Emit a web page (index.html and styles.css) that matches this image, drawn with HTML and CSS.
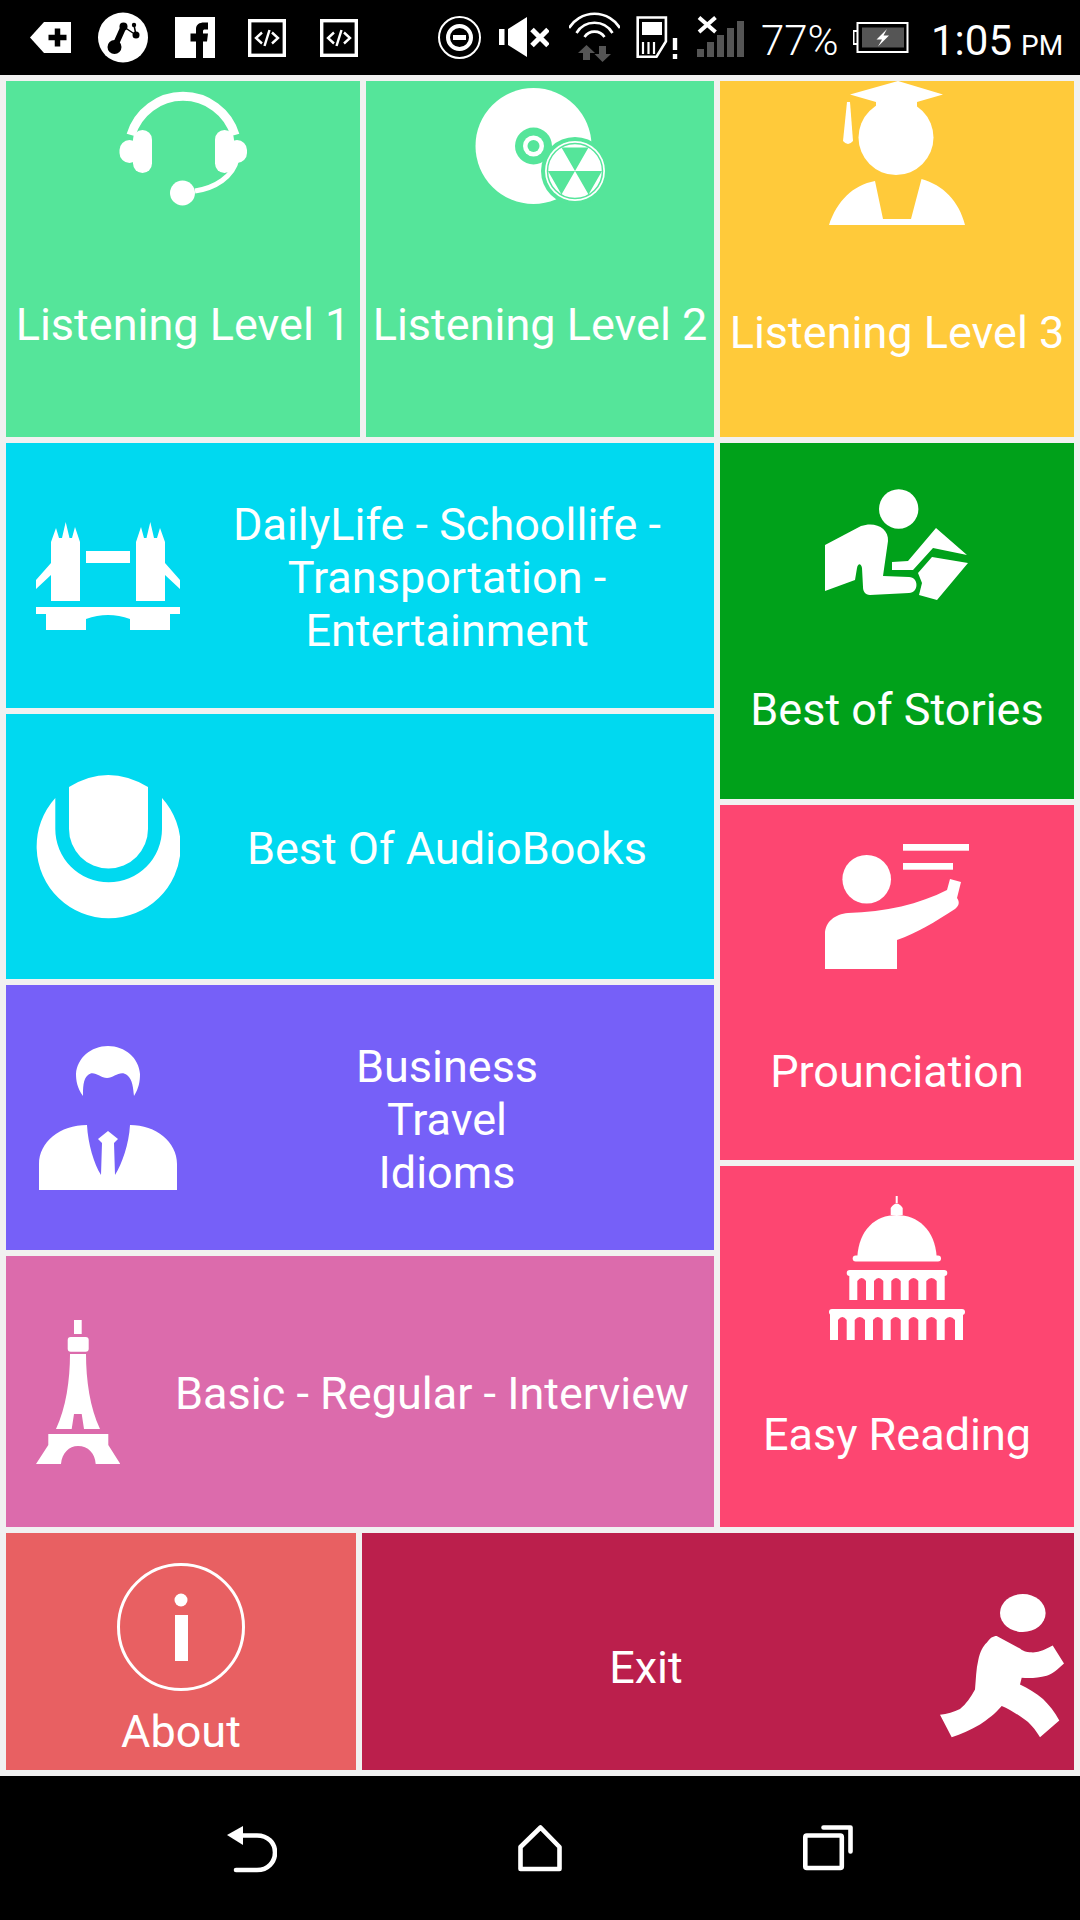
FILE: index.html
```html
<!DOCTYPE html>
<html lang="en">
<head>
    <meta charset="UTF-8">
    <meta name="viewport" content="width=device-width, initial-scale=1.0">
    <title>Listening Menu</title>
    <link rel="stylesheet" href="styles.css">
</head>
<body>
    <!-- Status bar -->
    <div class="status-bar">
        <svg class="st-tag" viewBox="30 0 42 75"><path d="M30 37.5 44 22H71V53H44Z" fill="#fff"/><path d="M57.5 28.5V46.5M48.5 37.5H66.5" stroke="#000" stroke-width="5.5"/></svg>
        <svg class="st-blob" viewBox="98 0 50 75"><circle cx="123" cy="37.5" r="25" fill="#fff"/><path d="M114.5 47 123.5 27" stroke="#000" stroke-width="6" stroke-linecap="round"/><circle cx="114.5" cy="47" r="7"/><circle cx="123.5" cy="26.5" r="4"/><circle cx="134" cy="25" r="2.2"/><circle cx="136" cy="35" r="3.5"/><path d="M124 27 136 35M134 25 136 35" stroke="#000" stroke-width="1.5"/></svg>
        <svg class="st-fb" viewBox="175 0 40 75"><rect x="175" y="17" width="40" height="41" fill="#fff"/><path d="M196 58V41.5H190.5V33.5H196V29C196 24.5 199.5 22.5 204 22.5H208V29.5H205C203.5 29.5 203 30 203 31.5V33.5H208L207 41.5H203V58Z"/></svg>
        <svg class="st-code" viewBox="248 0 38 75"><rect x="249.7" y="20.7" width="34.6" height="34.6" fill="none" stroke="#fff" stroke-width="3.4"/><path d="M262 32.5 256 38 262 43.5M272 32.5 278 38 272 43.5" fill="none" stroke="#fff" stroke-width="2.4"/><path d="M269.5 30 264.5 46" stroke="#fff" stroke-width="2.4"/></svg>
        <svg class="st-code st-code-2" viewBox="248 0 38 75"><rect x="249.7" y="20.7" width="34.6" height="34.6" fill="none" stroke="#fff" stroke-width="3.4"/><path d="M262 32.5 256 38 262 43.5M272 32.5 278 38 272 43.5" fill="none" stroke="#fff" stroke-width="2.4"/><path d="M269.5 30 264.5 46" stroke="#fff" stroke-width="2.4"/></svg>
        <svg class="st-dnd" viewBox="438 0 43 75"><circle cx="459.5" cy="37.5" r="20.5" fill="none" stroke="#fff" stroke-width="2"/><circle cx="459.5" cy="37.5" r="11.5" fill="none" stroke="#fff" stroke-width="4"/><rect x="453" y="35" width="13" height="5" fill="#fff"/></svg>
        <svg class="st-mute" viewBox="498 0 51 75"><path d="M499 29H504.5V45H499ZM508 29 527 17V57L508 45Z" fill="#fff"/><path d="M532 29.5 548 45.5M548 29.5 532 45.5" stroke="#fff" stroke-width="5"/></svg>
        <svg class="st-wifi" viewBox="569 0 51 75"><g fill="none" stroke="#fff" stroke-width="2.6"><path d="M569 28A30 30 0 0 1 620 28"/><path d="M576.5 33A21 21 0 0 1 612.5 33"/><path d="M584.5 37A12 12 0 0 1 604.5 37"/></g><path d="M586.5 45 595 53H590V60H583V53H578ZM599 46H606V54H611L602.5 62 594.5 54H599Z" fill="#555"/></svg>
        <svg class="st-sim" viewBox="636 0 42 75"><path d="M637.7 17.5H665.9V41.5L656.5 56.7H637.7Z" fill="none" stroke="#fff" stroke-width="2.6"/><rect x="642" y="22" width="20" height="13" fill="#fff"/><path d="M643 42V54M648.5 42V54M654 42V54" stroke="#fff" stroke-width="2.2"/><rect x="672.8" y="38" width="4.4" height="12" fill="#fff"/><rect x="672.8" y="54" width="4.4" height="5" fill="#fff"/></svg>
        <svg class="st-signal" viewBox="697 0 47 75"><path d="M699 17.5 715.5 32M715.5 17.5 699 32" stroke="#fff" stroke-width="4"/><path d="M697 49H704V57H697ZM707 42H714V57H707ZM717 35H724V57H717ZM727 28H734V57H727ZM737 21H744V57H737Z" fill="#555"/></svg>
        <span class="st-percent">77%</span>
        <svg class="st-battery" viewBox="853 0 56 75"><path d="M857 31H853.5V44H857" fill="none" stroke="#fff" stroke-width="2"/><rect x="857.5" y="23" width="50" height="29" fill="none" stroke="#fff" stroke-width="2"/><rect x="862" y="27.5" width="42" height="20" fill="#555"/><path d="M887 29 876.5 39.5H882L878 46.5 889 35.5H883.5Z" fill="#fff"/></svg>
        <span class="st-time">1:05<span class="st-ampm">PM</span></span>
    </div>

    <div class="board">
        <div class="board-top">
            <div class="left-col">
                <div class="top-pair">
                    <div class="tile tile-stack mint first">
                        <svg class="icon" viewBox="0 0 144 144">
                            <path d="M20 54A54.300 54.300 0 0 1 124 54" fill="none" stroke="#fff" stroke-width="9"/>
                            <path d="M126 78C122 96 104 107 84 110" fill="none" stroke="#fff" stroke-width="5"/>
                            <rect x="22" y="49" width="19" height="43" rx="9.5" fill="#fff"/>
                            <rect x="8.5" y="59" width="20" height="23" rx="10" fill="#fff"/>
                            <rect x="104" y="49" width="19" height="43" rx="9.5" fill="#fff"/>
                            <rect x="116" y="59" width="20" height="23" rx="10" fill="#fff"/>
                            <circle cx="71.5" cy="112" r="12.5" fill="#fff"/>
                        </svg>
                        <span class="label">Listening Level 1</span>
                    </div>
                    <div class="tile tile-stack mint second">
                        <svg class="icon" viewBox="0 0 144 144">
                            <circle cx="65.5" cy="65" r="58" fill="#fff"/>
                            <circle cx="65.5" cy="65" r="18.5" fill="#55e59a"/>
                            <circle cx="65.5" cy="65" r="10.5" fill="#fff"/>
                            <circle cx="65.5" cy="65" r="6" fill="#55e59a"/>
                            <circle cx="107" cy="90" r="34" fill="#55e59a"/>
                            <circle cx="107" cy="90" r="30" fill="#fff"/>
                            <circle cx="107" cy="90" r="27.5" fill="none" stroke="#55e59a" stroke-width="1.5"/>
                            <path d="M107 90 93.5 66.6H120.5ZM107 90H134L120.5 113.4ZM107 90H80L93.5 113.4Z" fill="#55e59a"/>
                        </svg>
                        <span class="label">Listening Level 2</span>
                    </div>
                </div>
                <div class="tile tile-row cyan">
                    <svg class="icon" viewBox="0 0 144 144">
                        <path d="M15 97V38L20 24 23 34H26L29.7 18 33.5 34H36L39 23 44 38V97Z" fill="#fff"/>
                        <path d="M129 97V38L124 24 121 34H118L114.3 18 110.5 34H108L105 23 100 38V97Z" fill="#fff"/>
                        <rect x="50" y="47" width="44" height="12" fill="#fff"/>
                        <path d="M0 76 15 59V71L0 85ZM144 76 129 59V71L144 85Z" fill="#fff"/>
                        <path d="M0 103H144V110H134V126H94V115Q72 107 50 115V126H10V110H0Z" fill="#fff"/>
                    </svg>
                    <span class="label label-fill">DailyLife - Schoollife -<br>Transportation -<br>Entertainment</span>
                </div>
                <div class="tile tile-row cyan">
                    <svg class="icon" viewBox="0 0 144 144">
                        <path d="M33 12Q72 -12 112 12V54A39.5 39.5 0 0 1 33 54Z" fill="#fff"/>
                        <path d="M19.3 23V54A53.3 53.3 0 0 0 126 54V23A72 72 0 1 1 19.3 23Z" fill="#fff"/>
                    </svg>
                    <span class="label label-fill">Best Of AudioBooks</span>
                </div>
                <div class="tile tile-row violet">
                    <svg class="icon" viewBox="0 0 144 144">
                        <path d="M47 50C41 42 40 34 40 28 41 12 55 0 72 0 89 0 103 12 104 28 104 35 103 42 98 50 97 42 97 34 91 29 84 24 78 32 71 32 64 32 58 24 52 29 47 33 47 42 47 50Z" fill="#fff"/>
                        <path d="M3 144V118C3 96 24 79 51 79 52 98 58 118 65 129L66 97 62 93 72 85 82 93 78 97 79 129C86 118 93 98 94 79 120 79 141 96 141 118V144Z" fill="#fff"/>
                    </svg>
                    <span class="label label-fill">Business<br>Travel<br>Idioms</span>
                </div>
                <div class="tile tile-row orchid row-last">
                    <svg class="icon icon-tower" viewBox="0 0 84 144">
                        <rect x="38" y="0" width="7.7" height="14" fill="#fff"/>
                        <rect x="31.7" y="17" width="21" height="14.7" rx="3" fill="#fff"/>
                        <path d="M34 34H50C50 60 54 88 64 109H48L45.7 94H38L35.7 109H20C30 88 34 60 34 34Z" fill="#fff"/>
                        <path d="M12.3 114H72.3V125L84.3 144H59.7C59 133 52 126 42 126 33 126 26 133 25 144H0L12.3 125Z" fill="#fff"/>
                    </svg>
                    <span class="label label-fill">Basic - Regular - Interview</span>
                </div>
            </div>

            <div class="right-col">
                <div class="tile tile-stack amber cap">
                    <svg class="icon" viewBox="0 0 144 144">
                        <path d="M73 0 118 13.5 92 21V30H51V21L25 13.5Z" fill="#fff"/>
                        <path d="M22 21H25L28 60Q23 66 18 60Z" fill="#fff"/>
                        <circle cx="71" cy="56.5" r="37.5" fill="#fff"/>
                        <path d="M4 144C12 120 28 104 50 100L58 138H86L96.5 98C118 104 134 120 140 144Z" fill="#fff"/>
                    </svg>
                    <span class="label">Listening Level 3</span>
                </div>
                <div class="tile tile-stack forest stories">
                    <svg class="icon" viewBox="0 0 144 144">
                        <circle cx="73.7" cy="36" r="19.7" fill="#fff"/>
                        <path d="M0 72 36 53C50 48 64 55 63 68L58 103 84 104C94 104 94 120 84 120L45 122C40 122 38 118 38 114L37 95C36 90 33 90 32 95L30 107 0 118Z" fill="#fff"/>
                        <path d="M111 55 142 82 108 75 88 97H67V89L83 88Z" fill="#fff"/>
                        <path d="M143 90 112 127 94 122 97 110 93 100 107 84Z" fill="#fff"/>
                    </svg>
                    <span class="label">Best of Stories</span>
                </div>
                <div class="tile tile-stack rose pron">
                    <svg class="icon" viewBox="0 0 144 144">
                        <rect x="78" y="10" width="66" height="6.7" fill="#fff"/>
                        <rect x="78" y="29" width="50" height="6.7" fill="#fff"/>
                        <circle cx="41.7" cy="45.3" r="24.3" fill="#fff"/>
                        <path d="M0 135V100C0 88 10 80 23 79 60 78 95 70 122 56L125 45 136 48 132 64C135 68 134 72 130 75 110 88 92 99 72 106V135Z" fill="#fff"/>
                    </svg>
                    <span class="label">Prounciation</span>
                </div>
                <div class="tile tile-stack rose reading">
                    <svg class="icon" viewBox="0 0 144 144">
                        <path d="M70.7 0H72.7V7H70.7Z" fill="#fff"/>
                        <path d="M65.7 19V12Q71.7 3 77.7 12V19Z" fill="#fff"/>
                        <path d="M32.3 61C34 34 50 19 71.7 19 93 19 110 34 111.7 61Z" fill="#fff"/>
                        <rect x="27.7" y="59.5" width="88.3" height="6" rx="3" fill="#fff"/>
                        <rect x="21.7" y="74" width="100.6" height="6" rx="3" fill="#fff"/>
                        <rect x="24.3" y="78" width="95.4" height="26" fill="#fff"/>
                        <path d="M32.3 104V85Q36.7 79 41 85V104ZM49 104V85Q53.7 79 58.3 85V104ZM66.3 104V85Q71 79 75.7 85V104ZM83.7 104V85Q88.5 79 93.3 85V104ZM101.3 104V85Q106.5 79 111.7 85V104Z" fill="#fd4671"/>
                        <rect x="4" y="113" width="136" height="6" rx="3" fill="#fff"/>
                        <rect x="5" y="117" width="133" height="27" fill="#fff"/>
                        <path d="M13 144V124Q17.3 118 21.7 124V144ZM29.7 144V124Q34.8 118 40 124V144ZM48 144V124Q52.8 118 57.7 124V144ZM65.7 144V124Q70.7 118 75.7 124V144ZM83.7 144V124Q88.5 118 93.3 124V144ZM101.3 144V124Q106.5 118 111.7 124V144ZM119.7 144V124Q124.8 118 130 124V144Z" fill="#fd4671"/>
                    </svg>
                    <span class="label">Easy Reading</span>
                </div>
            </div>
        </div>

        <div class="board-bottom">
            <div class="tile tile-stack salmon about">
                <svg class="icon-info" viewBox="0 0 128 128">
                    <circle cx="64" cy="64" r="62.5" fill="none" stroke="#fff" stroke-width="3"/>
                    <circle cx="64" cy="37" r="6.5" fill="#fff"/>
                    <rect x="58" y="52" width="13" height="46" fill="#fff"/>
                </svg>
                <span class="label">About</span>
            </div>
            <div class="tile tile-row crimson exit">
                <span class="label label-fill">Exit</span>
                <svg class="icon" viewBox="0 0 144 144">
                    <ellipse cx="92.8" cy="19" rx="22.8" ry="19" fill="#fff"/>
                    <path d="M66.7 42 90 54.6C94 58 98 58.5 103 58.5 110 58 116 55 122.7 51.5L134 69.4C128 75 122 80 116.7 81.8 108 84 100 84.5 91.7 83.8L90 90.4C98 94 106 99 113 105 119 111 125 118 129.3 126.6L110 143.3C105 135 100 129 93.3 124.6 87 120 79 115 71.7 112 65 120 58 125 50 130.5 41 136 31 140 21.7 143.3L10 120.7C17 120 24 118 30 115 36 110 41 103 45 95.5 46 85 46 75 48.3 66 50 58 53 52 56.7 48.8 60 44 63 42 66.7 42Z" fill="#fff"/>
                </svg>
            </div>
        </div>
    </div>

    <!-- Navigation bar -->
    <div class="nav-bar">
        <svg class="nav-back" viewBox="227 1820 50 52"><path d="M227 1833 243 1824V1843Z" fill="#fff"/><path d="M243 1833.5H257C268 1833.5 275 1841 275 1850.5 275 1860 268 1868 257 1868H236" fill="none" stroke="#fff" stroke-width="4.6" stroke-linecap="round"/></svg>
        <svg class="nav-home" viewBox="518 1823 44 50"><path d="M540.5 1827.5 520.5 1847V1869H559.5V1847Z" fill="none" stroke="#fff" stroke-width="4.6" stroke-linejoin="round"/></svg>
        <svg class="nav-recent" viewBox="803 1826 50 47"><rect x="805.3" y="1836.5" width="36.5" height="32.5" rx="1.5" fill="none" stroke="#fff" stroke-width="4.6"/><path d="M823.5 1828.5H850.5V1852.5" fill="none" stroke="#fff" stroke-width="4.6" stroke-linecap="round" stroke-linejoin="round"/></svg>
    </div>
</body>
</html>
```

FILE: styles.css
```css
html, body {
    margin: 0;
    padding: 0;
}

body {
    width: 1080px;
    height: 1920px;
    background-color: #f1f1f1;
    font-family: Roboto, "Liberation Sans", sans-serif;
    display: flex;
    flex-direction: column;
    overflow: hidden;
}

svg {
    display: block;
    flex: none;
}

/* Status bar */
.status-bar {
    height: 75px;
    background-color: #000;
    color: #fff;
    display: flex;
    align-items: center;
    flex: none;
}

.status-bar svg {
    height: 75px;
}

.st-tag { width: 42px; margin-left: 30px; }
.st-blob { width: 50px; margin-left: 26px; }
.st-fb { width: 40px; margin-left: 27px; }
.st-code { width: 38px; margin-left: 33px; }
.st-code-2 { margin-left: 34px; }
.st-dnd { width: 43px; margin-left: 80px; }
.st-mute { width: 51px; margin-left: 17px; }
.st-wifi { width: 51px; margin-left: 20px; }
.st-sim { width: 42px; margin-left: 16px; }
.st-signal { width: 47px; margin-left: 19px; }

.st-percent {
    width: 76px;
    margin-left: 17px;
    margin-top: 5px;
    font-size: 42px;
    font-weight: 300;
    white-space: nowrap;
}

.st-battery { width: 56px; margin-left: 16px; }

.st-time {
    margin-left: 22px;
    margin-top: 5px;
    font-size: 42px;
    white-space: nowrap;
}

.st-ampm {
    margin-left: 9px;
    font-size: 28px;
}

/* Tiles */
.board {
    padding: 6px;
    display: flex;
    flex-direction: column;
    gap: 6px;
    flex: none;
}

.board-top {
    display: flex;
    gap: 6px;
}

.left-col {
    width: 708px;
    display: flex;
    flex-direction: column;
    gap: 6px;
}

.right-col {
    width: 354px;
    display: flex;
    flex-direction: column;
    gap: 6px;
}

.top-pair {
    display: flex;
    gap: 6px;
    height: 356px;
}

.board-bottom {
    display: flex;
    gap: 6px;
    height: 237px;
}

.tile {
    color: #fff;
    box-sizing: border-box;
    overflow: hidden;
}

.tile-stack {
    display: flex;
    flex-direction: column;
    align-items: center;
}

.tile-row {
    display: flex;
    align-items: center;
    height: 265px;
    padding-left: 30px;
}

.row-last { height: 271px; }

.first { width: 354px; }
.second { width: 348px; }

.icon {
    width: 144px;
    height: 144px;
}

.icon-tower {
    width: 84px;
    margin-right: 30px;
}

.icon-info {
    width: 128px;
    height: 128px;
    margin-top: 30px;
}

.label {
    font-size: 45px;
    line-height: 53px;
    text-align: center;
    white-space: nowrap;
}

.label-fill {
    flex: 1;
    margin-top: 3px;
}

.first .label, .second .label { margin-top: 73px; }

.cap { height: 356px; }
.cap .label { margin-top: 81px; }

.stories { height: 356px; padding-top: 30px; }
.stories .label { margin-top: 66px; }

.pron { height: 355px; padding-top: 29px; }
.pron .label { margin-top: 67px; }

.reading { height: 361px; padding-top: 30px; }
.reading .label { margin-top: 68px; }

.about { width: 350px; }
.about .label { margin-top: 14px; }

.exit {
    flex: 1;
    height: auto;
    padding-left: 0;
    padding-top: 29px;
}

/* Colours */
.mint { background-color: #55e59a; }
.amber { background-color: #ffca3a; }
.cyan { background-color: #00d9f0; }
.violet { background-color: #7660f8; }
.orchid { background-color: #dc6bac; }
.forest { background-color: #00a11a; }
.rose { background-color: #fd4671; }
.salmon { background-color: #e86062; }
.crimson { background-color: #bb1f4c; }

/* Navigation bar */
.nav-bar {
    flex: 1;
    background-color: #000;
    display: flex;
    align-items: center;
    padding-left: 227px;
}

.nav-back { width: 50px; height: 52px; }
.nav-home { width: 44px; height: 50px; margin-left: 241px; }
.nav-recent { width: 50px; height: 47px; margin-left: 241px; }
```
